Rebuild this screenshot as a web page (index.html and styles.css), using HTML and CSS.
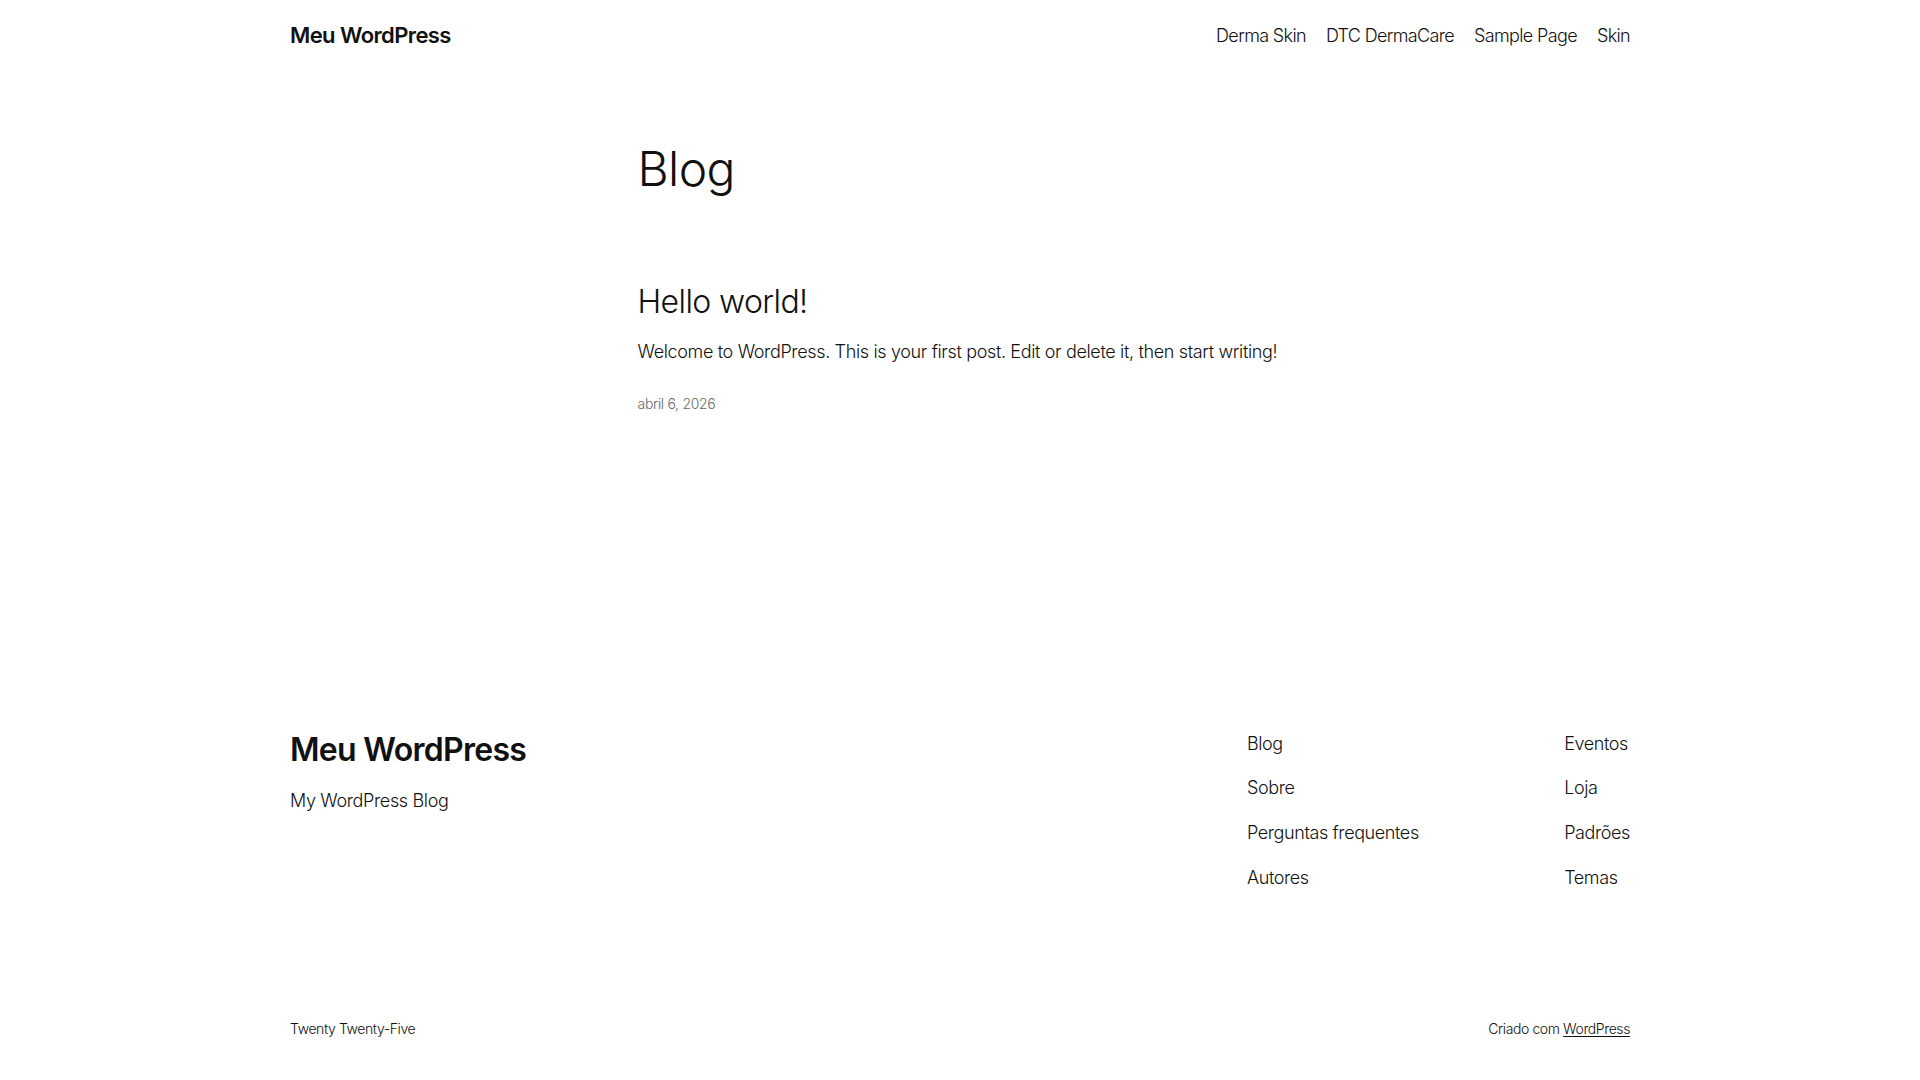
FILE: index.html
```html
<!DOCTYPE html>
<html lang="pt-BR">
<head>
<meta charset="utf-8">
<title>Blog – Meu WordPress</title>
<link rel="stylesheet" href="styles.css">
</head>
<body>
<div class="site">
  <header class="site-header">
    <div class="wide header-row">
      <a class="site-title" href="#">Meu WordPress</a>
      <nav class="header-nav">
        <a href="#">Derma Skin</a>
        <a href="#">DTC DermaCare</a>
        <a href="#">Sample Page</a>
        <a href="#">Skin</a>
      </nav>
    </div>
  </header>

  <main class="site-main">
    <div class="content">
      <h1 class="page-title">Blog</h1>
      <article class="post">
        <h2 class="post-title"><a href="#">Hello world!</a></h2>
        <p class="post-excerpt">Welcome to WordPress. This is your first post. Edit or delete it, then start writing!</p>
        <div class="post-date">abril 6, 2026</div>
      </article>
    </div>
  </main>

  <footer class="site-footer">
    <div class="wide footer-top">
      <div class="footer-brand">
        <a class="footer-title" href="#">Meu WordPress</a>
        <p class="tagline">My WordPress Blog</p>
      </div>
      <div class="footer-navs">
        <nav class="footer-nav">
          <a href="#">Blog</a>
          <a href="#">Sobre</a>
          <a href="#">Perguntas frequentes</a>
          <a href="#">Autores</a>
        </nav>
        <nav class="footer-nav">
          <a href="#">Eventos</a>
          <a href="#">Loja</a>
          <a href="#">Padrões</a>
          <a href="#">Temas</a>
        </nav>
      </div>
    </div>
    <div class="wide footer-bottom">
      <span>Twenty Twenty-Five</span>
      <span>Criado com <a class="credit-link" href="#">WordPress</a></span>
    </div>
  </footer>
</div>
</body>
</html>
```

FILE: styles.css
```css
* {
  box-sizing: border-box;
}

html, body {
  margin: 0;
  padding: 0;
  background: #ffffff;
}

body {
  font-family: "Inter", "Noto Sans", "Liberation Sans", sans-serif;
  font-weight: 300;
  font-size: 18px;
  line-height: 1.4;
  color: #111111;
  letter-spacing: -0.35px;
}

a {
  color: inherit;
  text-decoration: none;
}

.wide {
  width: 1340px;
  margin: 0 auto;
}

.content {
  width: 645px;
  margin: 0 auto;
}

/* Header */
.site-header {
  padding: 20px 0;
}

.header-row {
  display: flex;
  justify-content: space-between;
  align-items: center;
}

.site-title {
  font-size: 22px;
  font-weight: 600;
  line-height: 1.4;
  letter-spacing: -0.6px;
}

.header-nav {
  display: flex;
  gap: 20px;
  font-size: 18px;
  font-weight: 300;
  letter-spacing: -0.65px;
}

/* Main */
.site-main {
  padding-top: 71px;
  min-height: 660px;
}

.page-title {
  margin: 0;
  font-size: 48px;
  font-weight: 300;
  line-height: 1.125;
  letter-spacing: -0.6px;
}

.post {
  margin-top: 87px;
}

.post-title {
  margin: 0;
  font-size: 32px;
  font-weight: 300;
  line-height: 1.2;
  letter-spacing: -0.6px;
}

.post-excerpt {
  margin: 18px 0 0;
}

.post-date {
  margin-top: 30px;
  font-size: 14px;
  color: #686868;
  font-weight: 300;
  letter-spacing: -0.3px;
}

/* Footer */
.footer-top {
  display: flex;
  justify-content: space-between;
  align-items: flex-start;
}

.footer-title {
  display: block;
  font-size: 32px;
  font-weight: 600;
  line-height: 1.2;
  letter-spacing: -0.7px;
}

.tagline {
  margin: 19px 0 0;
}

.footer-navs {
  display: flex;
  justify-content: space-between;
  width: 383px;
}

.footer-nav {
  display: flex;
  flex-direction: column;
  gap: 19.4px;
  font-weight: 300;
  letter-spacing: -0.4px;
}

.footer-bottom {
  display: flex;
  justify-content: space-between;
  margin-top: 129px;
  font-size: 14px;
  font-weight: 300;
  letter-spacing: -0.4px;
  padding-bottom: 40px;
}

.credit-link {
  text-decoration: underline;
  text-underline-offset: 2px;
}
```
